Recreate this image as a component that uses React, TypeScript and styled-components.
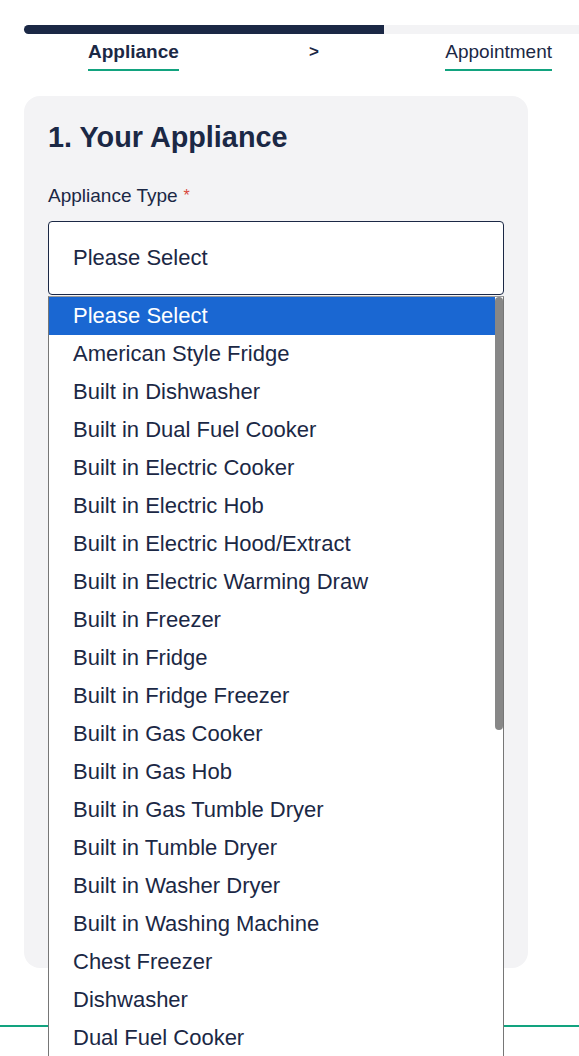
import styled, { createGlobalStyle } from "styled-components";

const navy = "#1b2845";
const green = "#12a37f";

const GlobalStyle = createGlobalStyle`
    body {
        margin: 0;
        font-family: "Liberation Sans", Arial, sans-serif;
        color: ${navy};
        background: #fff;
    }
`;

const Page = styled.div`
    width: 579px;
    height: 1056px;
    padding-top: 25px;
    box-sizing: border-box;
    overflow: hidden;
`;

const Progress = styled.div`
    margin-left: 24px;
    height: 9px;
    background-color: #f3f3f5;
    border-radius: 5px 0 0 5px;
`;

const ProgressFill = styled.div`
    height: 100%;
    background-color: ${navy};
    border-radius: 5px 0 0 5px;
`;

const Steps = styled.div`
    display: flex;
    justify-content: space-between;
    align-items: flex-start;
    padding: 0 27px 0 88px;
    margin-top: 7px;
`;

const Step = styled.span<{ $active?: boolean }>`
    font-size: 19px;
    line-height: 22px;
    font-weight: ${(p) => (p.$active ? 700 : 400)};
    padding-bottom: 6px;
    border-bottom: 2px solid ${green};
`;

const Arrow = styled.span`
    font-size: 17px;
    line-height: 22px;
    font-weight: 700;
    margin-left: 4px;
`;

const Card = styled.div`
    box-sizing: border-box;
    margin: 25px 0 0 24px;
    width: 504px;
    height: 872px;
    padding: 24px;
    background-color: #f3f3f5;
    border-radius: 16px;
    display: flex;
    flex-direction: column;
`;

const Title = styled.h2`
    margin: 0;
    font-size: 28.8px;
    line-height: 34px;
    font-weight: 700;
`;

const Field = styled.div`
    position: relative;
    margin-top: 31px;
    display: flex;
    flex-direction: column;
    gap: 14px;
`;

const Label = styled.label`
    font-size: 19px;
    line-height: 22px;
    span {
        color: #d9463b;
        margin-left: 6px;
        font-size: 16px;
        vertical-align: top;
    }
`;

const SelectBox = styled.div`
    box-sizing: border-box;
    height: 74px;
    border: 1px solid ${navy};
    border-radius: 4px;
    background-color: #fff;
    padding-left: 24px;
    display: flex;
    align-items: center;
    font-size: 22px;
`;

const ListBox = styled.div`
    position: absolute;
    top: 111px;
    left: 0;
    width: 456px;
    height: 770px;
    box-sizing: border-box;
    border: 1px solid #767676;
    border-top-color: #9a9a9a;
    background-color: #fff;
    display: flex;
    overflow: hidden;
    z-index: 2;
`;

const Options = styled.ul`
    flex: 1;
    margin: 0;
    padding: 0;
    list-style: none;
`;

const Option = styled.li<{ $selected?: boolean }>`
    height: 38px;
    padding-left: 24px;
    display: flex;
    align-items: center;
    font-size: 22px;
    white-space: nowrap;
    color: ${(p) => (p.$selected ? "#fff" : navy)};
    background-color: ${(p) => (p.$selected ? "#1a67d2" : "transparent")};
`;

const ScrollTrack = styled.div`
    width: 8px;
    background-color: #fff;
`;

const ScrollThumb = styled.div`
    height: 433px;
    background-color: #878787;
    border-radius: 4px;
`;

const Footer = styled.div`
    margin-top: 57px;
    border-top: 2px solid ${green};
    height: 30px;
`;

const options = [
    "Please Select",
    "American Style Fridge",
    "Built in Dishwasher",
    "Built in Dual Fuel Cooker",
    "Built in Electric Cooker",
    "Built in Electric Hob",
    "Built in Electric Hood/Extract",
    "Built in Electric Warming Draw",
    "Built in Freezer",
    "Built in Fridge",
    "Built in Fridge Freezer",
    "Built in Gas Cooker",
    "Built in Gas Hob",
    "Built in Gas Tumble Dryer",
    "Built in Tumble Dryer",
    "Built in Washer Dryer",
    "Built in Washing Machine",
    "Chest Freezer",
    "Dishwasher",
    "Dual Fuel Cooker",
];

export default function App() {
    return (
        <Page>
            <GlobalStyle />
            <Progress>
                <ProgressFill style={{ width: "360px" }} />
            </Progress>
            <Steps>
                <Step $active>Appliance</Step>
                <Arrow>&gt;</Arrow>
                <Step>Appointment</Step>
            </Steps>
            <Card>
                <Title>1. Your Appliance</Title>
                <Field>
                    <Label>
                        Appliance Type<span>*</span>
                    </Label>
                    <SelectBox>Please Select</SelectBox>
                    <ListBox>
                        <Options>
                            {options.map((o, i) => (
                                <Option key={o} $selected={i === 0}>
                                    {o}
                                </Option>
                            ))}
                        </Options>
                        <ScrollTrack>
                            <ScrollThumb />
                        </ScrollTrack>
                    </ListBox>
                </Field>
            </Card>
            <Footer />
        </Page>
    );
}
